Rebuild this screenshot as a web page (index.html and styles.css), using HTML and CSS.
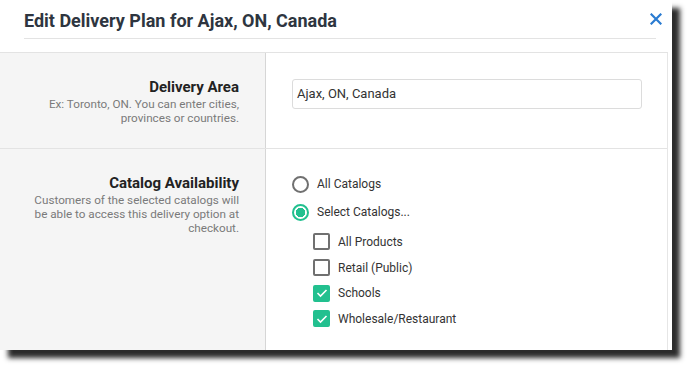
FILE: index.html
```html
<!DOCTYPE html>
<html>
<head>
<meta charset="utf-8">
<link rel="stylesheet" href="styles.css">
</head>
<body>
<div class="modal">
  <div class="header">
    <h1 class="title">Edit Delivery Plan for Ajax, ON, Canada</h1>
  </div>
  <button class="close" aria-label="Close">
    <svg width="12" height="12" viewBox="0 0 12 12"><path d="M1.5 1.5 L10.5 10.5 M10.5 1.5 L1.5 10.5" stroke="#2a7bd1" stroke-width="2.2" stroke-linecap="square"/></svg>
  </button>
  <div class="body">
    <div class="row row-area">
      <div class="label-col">
        <div class="label">Delivery Area</div>
        <div class="desc">Ex: Toronto, ON. You can enter cities,<br>provinces or countries.</div>
      </div>
      <div class="field-col">
        <div class="input">Ajax, ON, Canada</div>
      </div>
    </div>
    <div class="row row-catalog">
      <div class="label-col">
        <div class="label">Catalog Availability</div>
        <div class="desc">Customers of the selected catalogs will<br>be able to access this delivery option at<br>checkout.</div>
      </div>
      <div class="field-col options">
        <div class="radio-row"><span class="radio"></span><span>All Catalogs</span></div>
        <div class="radio-row"><span class="radio on"></span><span>Select Catalogs...</span></div>
        <div class="checks">
          <div class="check-row"><span class="box"></span><span>All Products</span></div>
          <div class="check-row"><span class="box"></span><span>Retail (Public)</span></div>
          <div class="check-row"><span class="box on"><svg width="12" height="10" viewBox="0 0 12 10"><path d="M1.5 5 L4.5 8 L10.5 2" fill="none" stroke="#fff" stroke-width="1.6"/></svg></span><span>Schools</span></div>
          <div class="check-row"><span class="box on"><svg width="12" height="10" viewBox="0 0 12 10"><path d="M1.5 5 L4.5 8 L10.5 2" fill="none" stroke="#fff" stroke-width="1.6"/></svg></span><span>Wholesale/Restaurant</span></div>
        </div>
      </div>
    </div>
  </div>
</div>
</body>
</html>
```

FILE: styles.css
```css
* { box-sizing: border-box; }
html, body { margin: 0; padding: 0; background: #fff; }
body { font-family: Roboto, "Liberation Sans", sans-serif; color: #333; width: 688px; height: 367px; overflow: hidden; }

.modal {
  position: relative;
  width: 672px;
  height: 350px;
  background: #fff;
  box-shadow: 8px 8px 5px rgba(20,20,20,0.9);
  display: flex;
  flex-direction: column;
}

.header {
  margin: 0 16px 0 24px;
  height: 39px;
  border-bottom: 1px solid #e3e3e3;
}
.title {
  margin: 0;
  padding-top: 10px;
  font-size: 18px;
  line-height: 22px;
  font-weight: 700;
  color: #2e3540;
}

.close {
  position: absolute;
  top: 13px;
  right: 10px;
  width: 12px;
  height: 12px;
  padding: 0;
  border: 0;
  background: none;
  display: flex;
}

.body {
  margin-top: 13px;
  width: 668px;
  flex: 1;
  border-top: 1px solid #e3e3e3;
  border-right: 1px solid #e6e6e6;
  display: flex;
  flex-direction: column;
}

.row { display: flex; }
.row-area { height: 96px; border-bottom: 1px solid #e3e3e3; }
.row-catalog { flex: 1; }

.label-col {
  width: 266px;
  background: #f5f5f5;
  border-right: 1px solid #d6d6d6;
  text-align: right;
  padding: 25px 26px 0 0;
}
.label {
  font-size: 15px;
  line-height: 18px;
  font-weight: 700;
  color: #222;
}
.desc {
  margin-top: 1px;
  font-size: 11.7px;
  line-height: 14px;
  color: #7a7a7a;
}

.field-col { flex: 1; padding: 26px 0 0 26px; }
.input {
  width: 350px;
  height: 30px;
  border: 1px solid #dcdcdc;
  border-radius: 3px;
  padding: 0 4px;
  font-size: 13px;
  line-height: 28px;
  color: #333;
}

.options { padding-top: 21px; font-size: 12px; color: #333; }
.radio-row { display: flex; align-items: center; gap: 8px; height: 28px; }
.radio {
  width: 17px; height: 17px;
  border: 2px solid #707070;
  border-radius: 50%;
}
.radio.on {
  border-color: #22c08f;
  background: radial-gradient(circle, #22c08f 0 4.5px, #fff 5px);
}
.checks { padding: 3px 0 0 21px; }
.check-row { display: flex; align-items: center; gap: 8px; height: 25.7px; }
.box {
  width: 17px; height: 17px;
  border: 2px solid #707070;
  border-radius: 2px;
  display: flex; align-items: center; justify-content: center;
}
.box.on { background: #22c08f; border-color: #22c08f; }
```
